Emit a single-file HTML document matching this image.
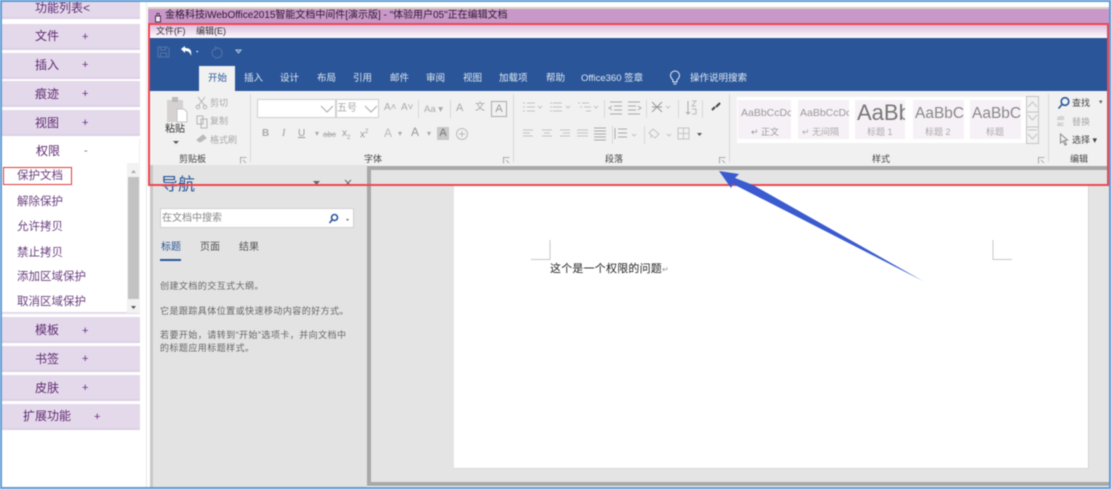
<!DOCTYPE html>
<html lang="zh"><head><meta charset="utf-8"><style>
html,body{margin:0;padding:0;background:#fff}
#r{position:relative;width:1111px;height:489px;overflow:hidden;background:#fff;font-family:"Liberation Sans","Noto Sans CJK SC",sans-serif;filter:blur(.5px)}
#r div,#r svg{position:absolute}
.t{white-space:nowrap;line-height:1}
.m{left:2px;width:138px;height:26px;background:#e4d9eb;border-bottom:2px solid #dcd0e4;box-sizing:border-box}
.s{color:#5e2a70;font-size:12px}
.p{color:#6a2a80;font-size:11px}
.l{left:17px;color:#6b3f80;font-size:11.5px}
.tab{color:#dfe7f2;font-size:9.5px;top:74px}
.g{color:#a8a8a8;font-size:9px}
.h{color:#444;font-size:9px;top:155px}
.st{background:#f6f1f6;top:100px;height:39px;overflow:hidden}
.sep{width:1px;background:#d8d8d8}
.n{color:#666;font-size:9px;left:160px;letter-spacing:.45px}
</style></head><body><div id="r">
<div style="left:146px;top:0;width:1px;height:489px;background:#e8e8e8"></div>
<div style="left:148px;top:7px;width:963px;height:2px;background:#d8cfc8"></div>
<div style="left:148px;top:9px;width:963px;height:15px;background:#c998c9"></div>
<div style="left:150px;top:24px;width:961px;height:14px;background:linear-gradient(#dcb8dc,#fdfbfd)"></div>
<div style="left:150px;top:38px;width:961px;height:53px;background:#2a5699"></div>
<div style="left:150px;top:91px;width:961px;height:75px;background:#f1f1f1"></div>
<div style="left:150px;top:165px;width:217px;height:324px;background:#e3e3e3"></div>
<div style="left:150px;top:165px;width:3px;height:324px;background:#c8c8c8"></div>
<div style="left:367px;top:166px;width:744px;height:320px;background:#e4e4e4;border:solid #a8a8a8;border-width:4px 0 4px 4px;box-sizing:border-box"></div>
<div style="left:454px;top:184px;width:635px;height:285px;background:#fff;border-right:1px solid #d4d4d4;border-bottom:1px solid #d8d8d8;box-sizing:border-box"></div>

<!-- sidebar -->
<div class="m" style="top:-7px"></div><div class="t s" style="left:35px;top:2px">功能列表&lt;</div>
<div class="m" style="top:24px"></div><div class="t s" style="left:35px;top:30px">文件</div><div class="t p" style="left:82px;top:32px">+</div>
<div class="m" style="top:53px"></div><div class="t s" style="left:35px;top:59px">插入</div><div class="t p" style="left:82px;top:60px">+</div>
<div class="m" style="top:81px"></div><div class="t s" style="left:35px;top:88px">痕迹</div><div class="t p" style="left:82px;top:89px">+</div>
<div class="m" style="top:110px"></div><div class="t s" style="left:35px;top:117px">视图</div><div class="t p" style="left:82px;top:118px">+</div>
<div style="left:2px;top:139px;width:138px;height:175px;border-right:1px solid #eee;border-bottom:2px solid #e4d9eb;box-sizing:border-box"></div>
<div class="t s" style="left:36px;top:145px">权限</div><div class="t" style="left:84px;top:146px;font-size:11px;color:#777">-</div>
<div style="left:3px;top:167px;width:69px;height:18px;border:1.5px solid #e03a3a;box-sizing:border-box"></div>
<div class="t l" style="top:171px">保护文档</div>
<div class="t l" style="top:197px">解除保护</div>
<div class="t l" style="top:222px">允许拷贝</div>
<div class="t l" style="top:248px">禁止拷贝</div>
<div class="t l" style="top:272px">添加区域保护</div>
<div class="t l" style="top:297px">取消区域保护</div>
<div style="left:127px;top:163px;width:13px;height:150px;background:#f2f2f2"></div>
<div style="left:128px;top:177px;width:11px;height:122px;background:#c2c2c2"></div>
<svg style="left:127px;top:163px" width="13" height="150"><path d="M4 10l2.500-3 2.500 3z" fill="#aaa"/><path d="M4 143l2.500 3 2.500-3z" fill="#555"/></svg>
<div class="m" style="top:317px"></div><div class="t s" style="left:35px;top:324px">模板</div><div class="t p" style="left:82px;top:326px">+</div>
<div class="m" style="top:346px"></div><div class="t s" style="left:35px;top:353px">书签</div><div class="t p" style="left:82px;top:354px">+</div>
<div class="m" style="top:375px"></div><div class="t s" style="left:35px;top:382px">皮肤</div><div class="t p" style="left:82px;top:383px">+</div>
<div class="m" style="top:404px"></div><div class="t s" style="left:23px;top:410px">扩展功能</div><div class="t p" style="left:94px;top:412px">+</div>

<!-- title/menu -->
<svg style="left:154px;top:12px" width="8" height="11"><path d="M1.500 4h5v6h-5zM3 4V1.500h2V4" fill="#f3e4f3" stroke="#50304f"/></svg>
<div class="t" style="left:165px;top:11px;font-size:10px;color:#2d1a2d;letter-spacing:-.02px">金格科技iWebOffice2015智能文档中间件[演示版] - "体验用户05"正在编辑文档</div>
<div class="t" style="left:156px;top:27px;font-size:9px;color:#333">文件(F)</div>
<div class="t" style="left:196px;top:27px;font-size:9px;color:#333">编辑(E)</div>

<!-- QAT -->
<svg style="left:155px;top:44px" width="90" height="16" fill="none">
<path d="M3 3h9l2 2v8H3zM5.500 3v3h5V3M5.500 13V9h6v4" stroke="#5573a8"/>
<path d="M26 5l4-3v2c5 0 7 2 6 8-1-4-3-5-6-5v2z" fill="#fff"/><path d="M41 7l2.500 0-1.200 1.500z" fill="#fff"/>
<path d="M61 4a5 5 0 1 1-3 2M60 2l1 3-3 1" stroke="#5573a8"/><path d="M81 6h5l-2.500 3z" stroke="#b8c9e0"/>
</svg>

<!-- tabs -->
<div style="left:199px;top:66px;width:36px;height:25px;background:#f1f1f1"></div>
<div class="t" style="left:208px;top:74px;font-size:9.500px;color:#2a5699">开始</div>
<div class="t tab" style="left:244px">插入</div><div class="t tab" style="left:280px">设计</div><div class="t tab" style="left:317px">布局</div><div class="t tab" style="left:353px">引用</div><div class="t tab" style="left:390px">邮件</div><div class="t tab" style="left:426px">审阅</div><div class="t tab" style="left:463px">视图</div><div class="t tab" style="left:499px">加载项</div><div class="t tab" style="left:546px">帮助</div><div class="t tab" style="left:581px">Office360 签章</div>
<svg style="left:668px;top:70px" width="14" height="16" fill="none" stroke="#e8eef6"><path d="M5 10C3 8 2.500 7 2.500 5.500a4.500 4.500 0 0 1 9 0c0 1.500-.5 2.500-2.500 4.500v2H5zM5.500 14h3"/></svg>
<div class="t tab" style="left:690px">操作说明搜索</div>

<!-- clipboard -->
<svg style="left:165px;top:96px" width="24" height="30"><path d="M2 4h16v22H2z" fill="#d6d2d2"/><path d="M7 1h6v5H7z" fill="#bbb"/><path d="M12 13h7l3 3v10H12z" fill="#fff" stroke="#c4c4c4"/></svg>
<div class="t" style="left:165px;top:125px;font-size:10px;color:#333">粘贴</div>
<svg style="left:172px;top:140px" width="8" height="5"><path d="M1 1h6l-3 3z" fill="#555"/></svg>
<svg style="left:195px;top:96px" width="14" height="50" fill="none" stroke="#b4b4b4"><path d="M3 1l7 9M10 1L3 10"/><circle cx="3" cy="11" r="1.800"/><circle cx="10" cy="11" r="1.800"/><path d="M2 20h6v8H2zM6 23h6v9H6z"/><path d="M2 44l6-5 3 3-6 4z" fill="#bbb"/></svg>
<div class="t g" style="left:210px;top:99px">剪切</div><div class="t g" style="left:210px;top:117px">复制</div><div class="t g" style="left:210px;top:136px">格式刷</div>
<div class="t h" style="left:179px">剪贴板</div>
<div class="sep" style="left:250px;top:94px;height:68px"></div>

<!-- font -->
<div style="left:257px;top:99px;width:79px;height:19px;background:#fff;border:1px solid #d0d0d0;box-sizing:border-box"></div>
<div style="left:336px;top:99px;width:43px;height:19px;background:#fff;border:1px solid #d0d0d0;box-sizing:border-box"></div>
<svg style="left:320px;top:105px" width="60" height="9" fill="none" stroke="#aaa"><path d="M1 1l6 6 6-6M45 1l6 6 6-6"/></svg>
<div class="t g" style="left:337px;top:104px;font-size:10px">五号</div>
<div class="t" style="left:384px;top:103px;font-size:10px;color:#aaa">A˄</div><div class="t" style="left:401px;top:103px;font-size:10px;color:#aaa">A˅</div>
<div class="sep" style="left:418px;top:100px;height:18px"></div>
<div class="t g" style="left:424px;top:105px;font-size:9.500px">Aa ▾</div>
<div class="sep" style="left:450px;top:100px;height:18px"></div>
<div class="t g" style="left:456px;top:103px;font-size:11px">A</div><div class="t g" style="left:475px;top:103px;font-size:10px">文</div>
<div class="t" style="left:491px;top:101px;width:14px;height:14px;border:1px solid #aaa;font-size:11px;color:#999;text-align:center;line-height:14px">A</div>
<div class="t" style="left:262px;top:129px;font-size:10px;font-weight:bold;color:#aaa">B</div>
<div class="t" style="left:282px;top:129px;font-size:10px;font-style:italic;font-family:'Liberation Serif',serif;color:#999">I</div>
<div class="t" style="left:298px;top:129px;font-size:10px;text-decoration:underline;color:#999">U</div>
<div class="t" style="left:315px;top:130px;font-size:8px;color:#aaa">▾</div>
<div class="t" style="left:323px;top:131px;font-size:8px;color:#aaa;text-decoration:line-through">abc</div>
<div class="t" style="left:342px;top:129px;font-size:10px;color:#999">x<sub style="font-size:6px">2</sub></div>
<div class="t" style="left:360px;top:129px;font-size:10px;color:#999">x<sup style="font-size:6px">2</sup></div>
<div class="t" style="left:384px;top:127px;font-size:12px;color:#bbb">A</div><div class="t" style="left:398px;top:130px;font-size:8px;color:#aaa">▾</div>
<div class="t" style="left:411px;top:126px;font-size:12px;color:#999">A</div><div class="t" style="left:427px;top:130px;font-size:8px;color:#aaa">▾</div>
<div class="t" style="left:437px;top:127px;width:12px;height:13px;background:#c8c8c8;font-size:11px;color:#777;text-align:center;line-height:13px">A</div>
<svg style="left:455px;top:127px" width="14" height="14" fill="none" stroke="#bbb"><circle cx="7" cy="7" r="5.500"/><path d="M7 4v6M4 7h6"/></svg>
<div class="t h" style="left:364px">字体</div>
<svg style="left:503px;top:157px" width="7" height="7" fill="none" stroke="#999" stroke-width=".8"><path d="M0 .5h6.500M.5 0v6.500M3 3l3 3"/></svg>
<svg style="left:240px;top:157px" width="7" height="7" fill="none" stroke="#999" stroke-width=".8"><path d="M0 .5h6.500M.5 0v6.500M3 3l3 3"/></svg>
<svg style="left:719px;top:157px" width="7" height="7" fill="none" stroke="#999" stroke-width=".8"><path d="M0 .5h6.500M.5 0v6.500M3 3l3 3"/></svg>
<svg style="left:1038px;top:157px" width="7" height="7" fill="none" stroke="#999" stroke-width=".8"><path d="M0 .5h6.500M.5 0v6.500M3 3l3 3"/></svg>
<div class="sep" style="left:513px;top:94px;height:68px"></div>

<!-- paragraph -->
<svg style="left:520px;top:98px" width="205" height="48" fill="none" stroke="#c4c4c4">
<path d="M7 5h8M7 9h8M7 13h8M3 5h2M3 9h2M3 13h2M33 5h9M33 9h9M33 13h9M30 5h2M30 9h2M30 13h2M62 5h7M64 9h7M66 13h5M58 5h2M60 9h2"/>
<path d="M18 8l2 2 2-2M46 8l2 2 2-2M74 8l2 2 2-2"/>
<path d="M90 4h12M94 8h8M94 12h8M90 16h12M92 8l-3 2 3 2" stroke="#aaa"/><path d="M108 4h12M108 8h8M108 12h8M108 16h12M118 8l3 2-3 2" stroke="#aaa"/>
<path d="M132 4l10 10M142 4l-10 10M132 9h10" stroke="#999"/><path d="M146 8l2 2 2-2"/>
<path d="M168 3v13M166 14l2 2 2-2" stroke="#aaa"/><path d="M172 3h4l-4 5h4M172 11h4v5h-4" stroke="#bbb"/>
<path d="M196 9l4-4M192 12l3-3" stroke="#444" stroke-width="2"/>
<path d="M3 32h10M3 35h7M3 38h10M22 32h10M24 35h6M22 38h10M40 32h10M43 35h7M40 38h10M57 32h11M57 35h11M57 38h11"/>
<path d="M74 30h12M74 33h12M74 36h12M74 39h12M74 42h12" stroke="#aaa"/>
<path d="M98 31h9M98 35h9M98 39h9M95 30v11" stroke="#aaa"/><path d="M112 36l2 2 2-2"/>
<path d="M133 31l6 5-4 4-6-5zM131 37v3"/><path d="M147 36l2 2 2-2"/>
<path d="M158 30h11v11h-11zM163.500 30v11M158 35.500h11"/>
<path d="M177 35h5l-2.500 3z" fill="#555" stroke="none"/>
</svg>
<div class="sep" style="left:604px;top:100px;height:18px"></div><div class="sep" style="left:646px;top:100px;height:18px"></div><div class="sep" style="left:678px;top:100px;height:18px"></div><div class="sep" style="left:702px;top:100px;height:18px"></div>
<div class="sep" style="left:612px;top:126px;height:18px"></div><div class="sep" style="left:644px;top:126px;height:18px"></div>
<div class="t h" style="left:605px">段落</div>
<div class="sep" style="left:729px;top:94px;height:68px"></div>

<!-- styles -->
<div style="left:737px;top:97px;width:289px;height:46px;background:#fff"></div>
<div class="st t" style="left:738px;width:53px"><div class="t" style="left:3px;top:8px;font-size:10.500px;color:#999">AaBbCcDc</div><div class="t" style="left:13px;top:28px;font-size:9px;color:#999">↵ 正文</div></div>
<div class="st t" style="left:798px;width:51px"><div class="t" style="left:2px;top:8px;font-size:10.500px;color:#999">AaBbCcDc</div><div class="t" style="left:4px;top:28px;font-size:9px;color:#aaa">↵ 无间隔</div></div>
<div class="st t" style="left:855px;width:50px"><div class="t" style="left:2px;top:2px;font-size:22px;color:#777">AaBbC</div><div class="t" style="left:12px;top:28px;font-size:9px;color:#aaa">标题 1</div></div>
<div class="st t" style="left:913px;width:51px"><div class="t" style="left:2px;top:6px;font-size:15.500px;color:#888">AaBbCc</div><div class="t" style="left:12px;top:28px;font-size:9px;color:#aaa">标题 2</div></div>
<div class="st t" style="left:970px;width:51px"><div class="t" style="left:2px;top:6px;font-size:15.500px;color:#888">AaBbCc</div><div class="t" style="left:16px;top:28px;font-size:9px;color:#aaa">标题</div></div>
<svg style="left:1026px;top:96px" width="13" height="48" fill="none" stroke="#c4c4c4"><path d="M.5.5h12v47H.5zM.5 16h12M.5 31h12M2 11l4.500-5 4.500 5M2 19l4.500 5 4.500-5M2 34h9M2 38l4.500 5 4.500-5"/></svg>
<div class="t h" style="left:872px">样式</div>
<div class="sep" style="left:1048px;top:94px;height:68px"></div>

<!-- editing -->
<svg style="left:1057px;top:96px" width="14" height="14" fill="none" stroke="#2a5699" stroke-width="1.600"><circle cx="8" cy="5.500" r="3.800"/><path d="M5 8.500L1.500 12.500"/></svg>
<div class="t" style="left:1072px;top:99px;font-size:9px;color:#444">查找</div><div class="t" style="left:1099px;top:99px;font-size:7px;color:#666">▾</div>
<div class="t" style="left:1057px;top:116px;font-size:6.500px;line-height:6px;color:#aaa;white-space:normal;width:14px">ab<br>ac</div>
<div class="t g" style="left:1072px;top:118px">替换</div>
<svg style="left:1059px;top:133px" width="11" height="14" fill="none" stroke="#888"><path d="M1.500 1l0 9 2.500-2 2 4 1.500-.5-2-4 3-.5z"/></svg>
<div class="t" style="left:1072px;top:136px;font-size:9px;color:#444">选择 ▾</div>
<div class="t h" style="left:1070px">编辑</div>

<!-- nav -->
<div class="t" style="left:161px;top:176px;font-size:17px;color:#2a5699">导航</div>
<svg style="left:312px;top:179px" width="45" height="10"><path d="M1 2h7L4.500 6z" fill="#666"/><path d="M33 1l6 6M39 1l-6 6" stroke="#666" fill="none"/></svg>
<div style="left:160px;top:208px;width:194px;height:20px;background:#fff;border:1px solid #d0d0d0;box-sizing:border-box"></div>
<div class="t" style="left:162px;top:214px;font-size:10px;color:#888">在文档中搜索</div>
<svg style="left:329px;top:213px" width="24" height="12" fill="none"><circle cx="5.500" cy="4.500" r="3" stroke="#2a5699" stroke-width="1.600"/><path d="M3 7L.5 10" stroke="#2a5699" stroke-width="1.600"/><path d="M17 6h3l-1.500 2z" fill="#666"/></svg>
<div class="t" style="left:161px;top:243px;font-size:10px;color:#2a5699">标题</div>
<div style="left:160px;top:259px;width:21px;height:2px;background:#2a5699"></div>
<div class="t" style="left:200px;top:243px;font-size:10px;color:#555">页面</div>
<div class="t" style="left:239px;top:243px;font-size:10px;color:#555">结果</div>
<div class="t n" style="top:282px">创建文档的交互式大纲。</div>
<div class="t n" style="top:307px">它是跟踪具体位置或快速移动内容的好方式。</div>
<div class="t n" style="top:331px">若要开始，请转到“开始”选项卡，并向文档中</div>
<div class="t n" style="top:344px">的标题应用标题样式。</div>

<!-- doc -->
<svg style="left:531px;top:240px" width="482" height="21" fill="none" stroke="#c8c8c8"><path d="M19 0v19.500H0M462 0v19.500H481"/></svg>
<div class="t" style="left:550px;top:264px;font-size:11px;letter-spacing:.2px;color:#222">这个是一个权限的问题<span style="color:#999;font-size:8px">↵</span></div>

<!-- annotations -->
<div style="left:148px;top:23px;width:961px;height:163px;border:2px solid #ee4650;box-sizing:border-box"></div>
<svg style="left:0;top:0" width="1111" height="489"><path d="M719 171L739 174 735 178 753 185 923 281 733 184 731 188z" fill="#3a5bd0"/></svg>
<div style="left:0;top:0;width:1111px;height:489px;border:2px solid #5b9bd5;box-sizing:border-box"></div>
</div></body></html>
